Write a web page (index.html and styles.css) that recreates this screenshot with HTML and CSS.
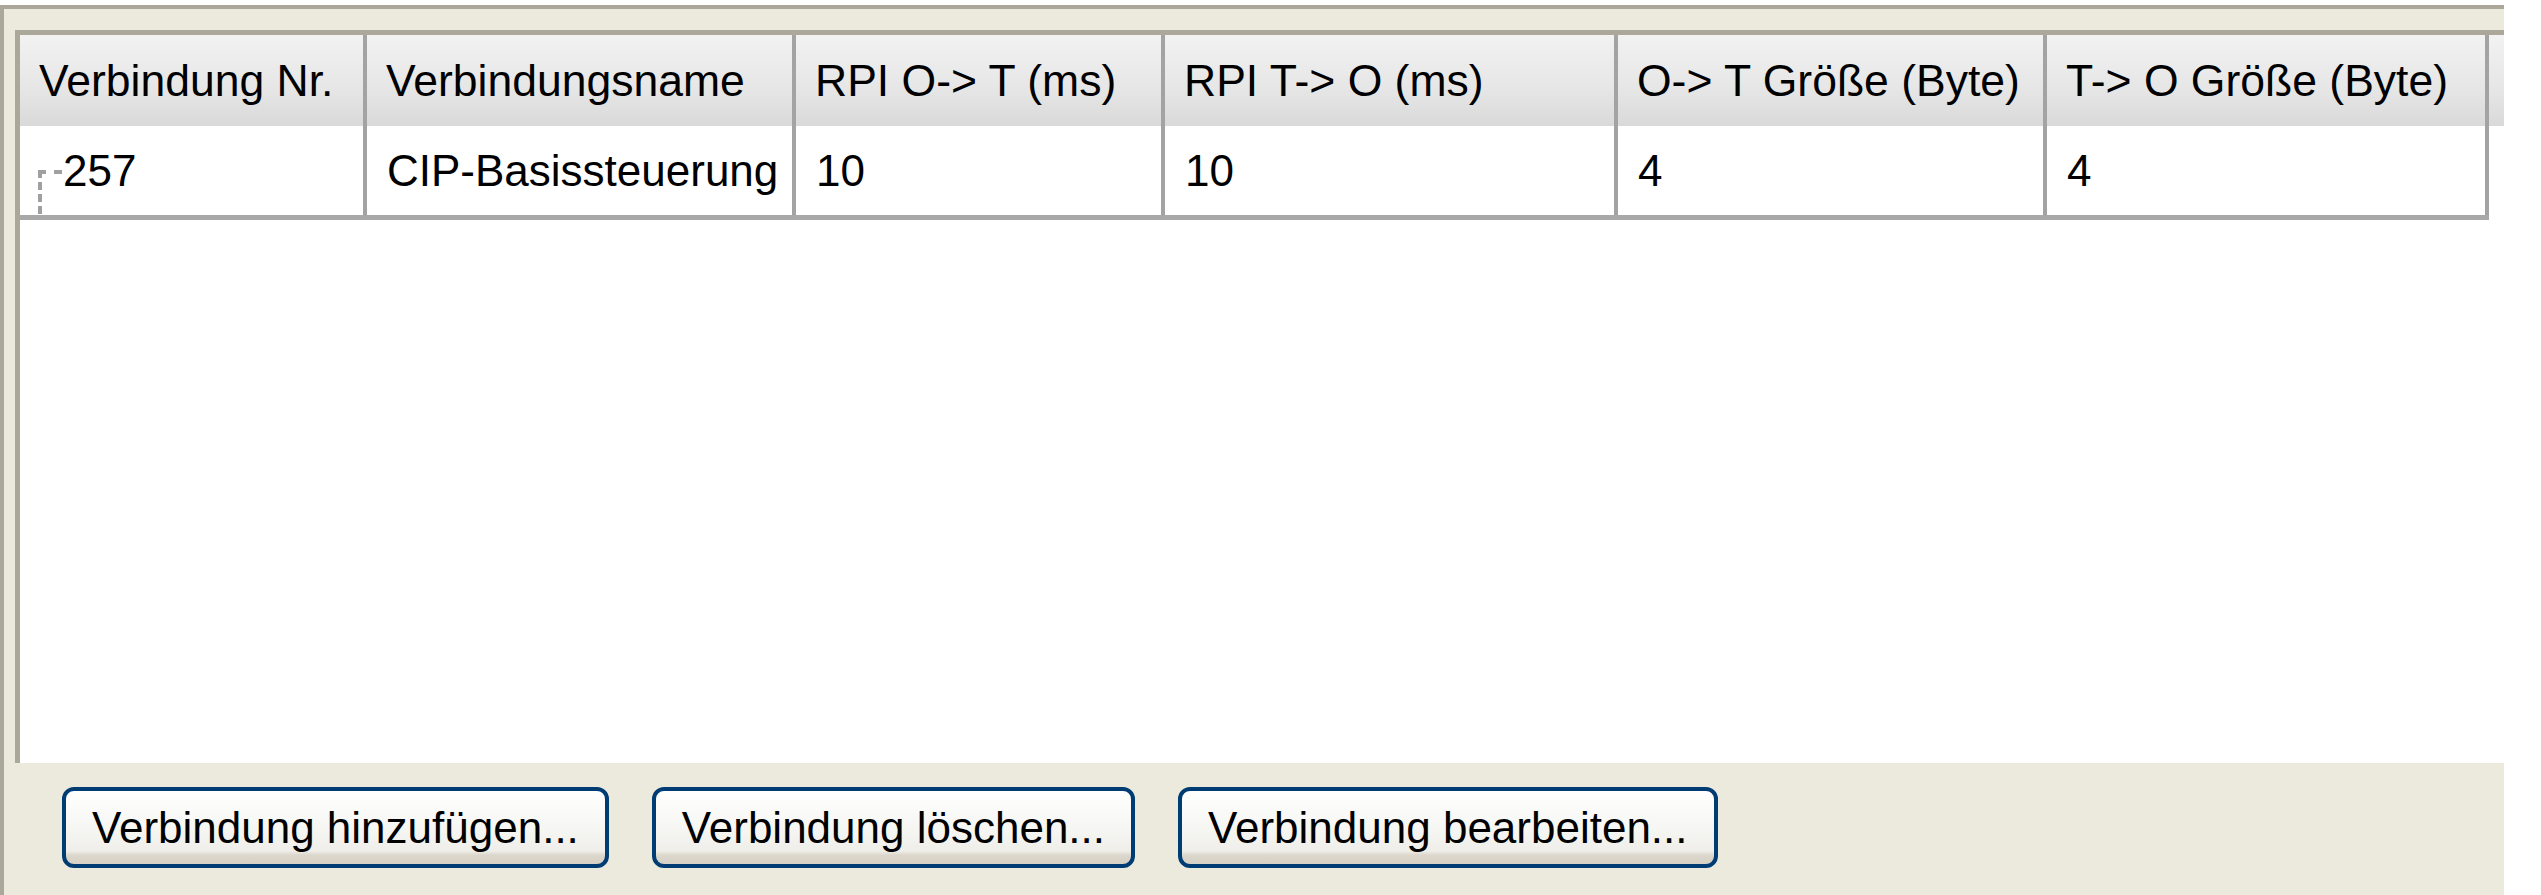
FILE: index.html
```html
<!DOCTYPE html>
<html>
<head>
    <meta charset="UTF-8">
    <title>Verbindungen</title>
    <link rel="stylesheet" href="styles.css">
</head>
<body>
    <div class="panel">
        <div class="grid">
            <div class="grid-head">
                <div class="cell c1">Verbindung Nr.</div>
                <div class="cell c2">Verbindungsname</div>
                <div class="cell c3">RPI O-&gt; T (ms)</div>
                <div class="cell c4">RPI T-&gt; O (ms)</div>
                <div class="cell c5">O-&gt; T Größe (Byte)</div>
                <div class="cell c6">T-&gt; O Größe (Byte)</div>
            </div>
            <div class="grid-row">
                <div class="cell c1 tree">257</div>
                <div class="cell c2">CIP-Basissteuerung</div>
                <div class="cell c3">10</div>
                <div class="cell c4">10</div>
                <div class="cell c5">4</div>
                <div class="cell c6">4</div>
            </div>
        </div>
        <div class="actions">
            <button class="btn">Verbindung hinzufügen...</button>
            <button class="btn">Verbindung löschen...</button>
            <button class="btn">Verbindung bearbeiten...</button>
        </div>
    </div>
</body>
</html>
```

FILE: styles.css
```css
body {
    margin: 0;
    padding: 0;
    background: #ffffff;
    font-family: "Liberation Sans", Arial, sans-serif;
    font-size: 44px;
    color: #000;
}

.panel {
    width: 2500px;
    height: 877px;
    margin-top: 5px;
    border-top: 4px solid #aca899;
    border-left: 4px solid #aca899;
    background: #ece9dd;
    padding-top: 21px;
    box-sizing: content-box;
    display: flex;
    flex-direction: column;
}

.grid {
    margin-left: 11px;
    height: 728px;
    border-top: 5px solid #aca899;
    border-left: 5px solid #aca899;
    background: #ffffff;
}

.grid-head {
    display: flex;
    height: 91px;
    background: linear-gradient(#f2f2f2, #e6e6e6 60%, #d9d9d9);
}

.grid-head .cell {
    padding-left: 19px;
    font-size: 44.5px;
}

.grid-row {
    display: flex;
    width: 2469px;
    height: 89px;
    border-bottom: 5px solid #a8a8a8;
}

.cell {
    box-sizing: border-box;
    border-right: 4px solid #a3a3a3;
    padding-left: 20px;
    display: flex;
    align-items: center;
    white-space: nowrap;
}

.c1 { width: 347px; }
.c2 { width: 429px; }
.c3 { width: 369px; }
.c4 { width: 453px; }
.c5 { width: 429px; }
.c6 { width: 442px; }

.tree {
    position: relative;
    padding-left: 43px;
}

.tree::before {
    content: "";
    position: absolute;
    left: 18px;
    top: 44px;
    width: 20px;
    height: 40px;
    border-top: 4px dashed #a0a0a0;
    border-left: 4px dashed #a0a0a0;
}

.actions {
    display: flex;
    gap: 43px;
    padding: 24px 0 0 58px;
}

.btn {
    height: 81px;
    padding: 0 26px;
    font-family: "Liberation Sans", Arial, sans-serif;
    font-size: 44px;
    color: #000;
    border: 4px solid #003c74;
    border-radius: 12px;
    background: linear-gradient(#ffffff, #f5f5f2 55%, #efeee9 82%, #dcd7cc 88%, #d6d0c5);
    cursor: pointer;
}
```
